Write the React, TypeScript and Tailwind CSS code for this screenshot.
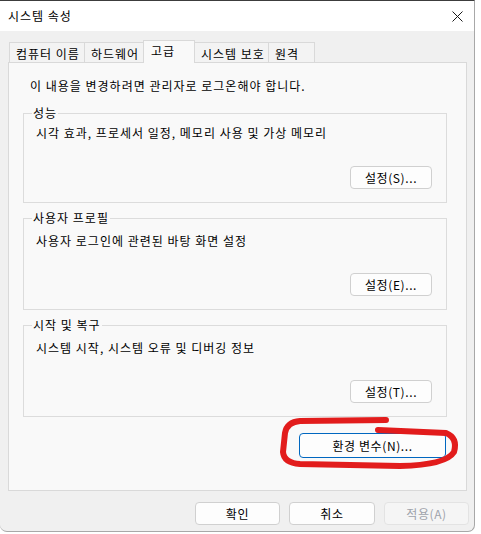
import React from 'react';

const tabs = [
  { label: '컴퓨터 이름', w: 'w-[76px]' },
  { label: '하드웨어', w: 'w-[60px]' },
  { label: '고급', w: 'w-[52px]', active: true },
  { label: '시스템 보호', w: 'w-[75px]' },
  { label: '원격', w: 'w-[47px]' },
];

const WinButton: React.FC<{ label: string; className?: string; focused?: boolean; disabled?: boolean }> = ({
  label,
  className = '',
  focused,
  disabled,
}) => (
  <button
    type="button"
    className={`h-[23px] rounded-[4px] border text-[12px] leading-[16px] tracking-[0.6px] flex items-center justify-center ${
      focused
        ? 'border-[#0067c0] bg-[#fdfdfd] text-black'
        : disabled
        ? 'border-[#e3e3e3] bg-[#f5f5f5] text-[#9ea3ab]'
        : 'border-[#d0d0d0] bg-[#fdfdfd] text-black'
    } ${className}`}
  >
    {label}
  </button>
);

const GroupBox: React.FC<{
  title: string;
  desc: string;
  button: string;
  descGap: string;
  btnGap: string;
}> = ({ title, desc, button, descGap, btnGap }) => (
  <fieldset className="border border-[#dcdcdc] mx-0 px-0">
    <legend className="ml-[8px] px-[1px] text-[12px] leading-[16px] tracking-[1px]">{title}</legend>
    <div className="pl-[12px] pr-[14px] pb-[13px]">
      <p className={`text-[12px] leading-[16px] tracking-[1px] ${descGap}`}>{desc}</p>
      <div className={`flex justify-end ${btnGap}`}>
        <WinButton label={button} className="w-[82px]" />
      </div>
    </div>
  </fieldset>
);

export default function App() {
  return (
    <div
      className="relative w-[481px] h-[534px] bg-white text-black"
      style={{ fontFamily: '"Noto Sans CJK KR", "Noto Sans", sans-serif' }}
    >
      <div className="w-[475px] h-[532px] bg-[#f0f0f0] border-t border-t-[#3c3c3c] border-r border-b border-r-[#a8a8a8] border-b-[#a8a8a8] rounded-b-[7px] flex flex-col overflow-hidden">
        {/* title bar */}
        <div className="h-[30px] bg-white flex items-center justify-between pl-[8px] pr-[7px]">
          <span className="text-[12px] leading-[16px] tracking-[1px]">시스템 속성</span>
          <div className="w-[20px] h-[20px] flex items-center justify-center">
            <svg width="11" height="11" viewBox="0 0 11 11">
              <path d="M0.5 0.5 L10.5 10.5 M10.5 0.5 L0.5 10.5" stroke="#1a1a1a" strokeWidth="1" />
            </svg>
          </div>
        </div>

        <div className="flex-1 flex flex-col pl-[8px] pr-[7px]">
          {/* tabs */}
          <div className="flex items-end h-[31px] pl-[1px]">
            {tabs.map((t, i) =>
              t.active ? (
                <div
                  key={t.label}
                  className={`${t.w} h-[23px] -ml-px -mb-px relative z-10 bg-[#f9f9f9] border border-b-0 border-[#d9d9d9] pl-[7px] pt-[2px] text-[12px] leading-[16px] tracking-[1px]`}
                >
                  {t.label}
                </div>
              ) : (
                <div
                  key={t.label}
                  className={`${t.w} h-[20px] ${i > 0 ? '-ml-px' : ''} bg-[#f3f3f3] border border-b-0 border-[#d9d9d9] pl-[6px] pt-[3px] text-[12px] leading-[16px] tracking-[1px] whitespace-nowrap`}
                >
                  {t.label}
                </div>
              )
            )}
          </div>

          {/* panel */}
          <div className="h-[429px] bg-[#f9f9f9] border border-[#d9d9d9] flex flex-col pl-[14px] pr-[19px] pt-[15px]">
            <p className="text-[12px] leading-[16px] tracking-[1px] pl-[7px]">
              이 내용을 변경하려면 관리자로 로그온해야 합니다.
            </p>

            <div className="mt-[11px] flex flex-col gap-[7px]">
              <GroupBox
                title="성능"
                desc="시각 효과, 프로세서 일정, 메모리 사용 및 가상 메모리"
                button="설정(S)..."
                descGap="mt-[4px]"
                btnGap="mt-[25px]"
              />
              <GroupBox
                title="사용자 프로필"
                desc="사용자 로그인에 관련된 바탕 화면 설정"
                button="설정(E)..."
                descGap="mt-[7px]"
                btnGap="mt-[24px]"
              />
              <GroupBox
                title="시작 및 복구"
                desc="시스템 시작, 시스템 오류 및 디버깅 정보"
                button="설정(T)..."
                descGap="mt-[7px]"
                btnGap="mt-[24px]"
              />
            </div>

            <div className="flex justify-end mt-[16px] pr-[1px]">
              <WinButton label="환경 변수(N)..." focused className="w-[147px] h-[25px]" />
            </div>
          </div>

          {/* dialog buttons */}
          <div className="flex justify-end gap-[9px] mt-[11px] -mr-[2px]">
            <WinButton label="확인" className="w-[85px]" />
            <WinButton label="취소" className="w-[86px]" />
            <WinButton label="적용(A)" disabled className="w-[85px]" />
          </div>
        </div>
      </div>

      {/* red marker around the environment variables button */}
      <svg className="absolute left-0 top-0 pointer-events-none" width="481" height="534" viewBox="0 0 481 534">
        <path
          d="M386 420 L300 421 Q287 422 285 433 L283 452 Q284 463 300 464 L400 466 Q446 465 454 452 Q458 438 446 433 L378 430"
          fill="none"
          stroke="#e21c1c"
          strokeWidth="6"
          strokeLinecap="round"
          strokeLinejoin="round"
        />
      </svg>
    </div>
  );
}
